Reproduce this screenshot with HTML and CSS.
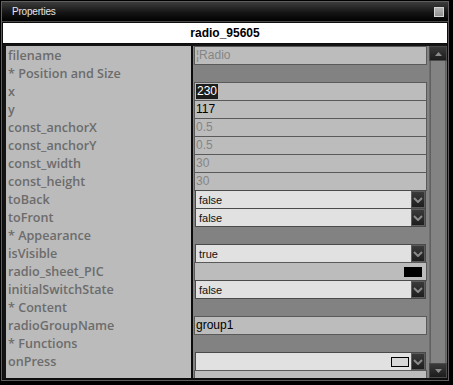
FILE: index.html
```html
<!DOCTYPE html>
<html lang="en">
<head>
    <meta charset="UTF-8">
    <title>Properties</title>
    <link rel="stylesheet" href="styles.css">
</head>
<body>
    <div class="window">
        <div class="frame">
            <!-- Panel title -->
            <div class="titlebar">
                <span class="title">Properties</span>
                <span class="title-btn"></span>
            </div>

            <div class="header">radio_95605</div>

            <div class="grid">
                <div class="props">
                    <div class="row">
                        <div class="label">filename</div>
                        <div class="value"><div class="box disabled">¦Radio</div></div>
                    </div>
                    <div class="row">
                        <div class="label">* Position and Size</div>
                        <div class="value"></div>
                    </div>
                    <div class="row">
                        <div class="label">x</div>
                        <div class="value"><div class="box"><span class="selected">230</span></div></div>
                    </div>
                    <div class="row">
                        <div class="label">y</div>
                        <div class="value"><div class="box">117</div></div>
                    </div>
                    <div class="row">
                        <div class="label">const_anchorX</div>
                        <div class="value"><div class="box disabled">0.5</div></div>
                    </div>
                    <div class="row">
                        <div class="label">const_anchorY</div>
                        <div class="value"><div class="box disabled">0.5</div></div>
                    </div>
                    <div class="row">
                        <div class="label">const_width</div>
                        <div class="value"><div class="box disabled">30</div></div>
                    </div>
                    <div class="row">
                        <div class="label">const_height</div>
                        <div class="value"><div class="box disabled">30</div></div>
                    </div>
                    <div class="row">
                        <div class="label">toBack</div>
                        <div class="value">
                            <div class="select"><span class="select-text">false</span><span class="select-btn"><svg width="10" height="6" viewBox="0 0 10 6"><polyline points="1,1 5,5 9,1" fill="none" stroke="#8a8a8a" stroke-width="2"/></svg></span></div>
                        </div>
                    </div>
                    <div class="row">
                        <div class="label">toFront</div>
                        <div class="value">
                            <div class="select"><span class="select-text">false</span><span class="select-btn"><svg width="10" height="6" viewBox="0 0 10 6"><polyline points="1,1 5,5 9,1" fill="none" stroke="#8a8a8a" stroke-width="2"/></svg></span></div>
                        </div>
                    </div>
                    <div class="row">
                        <div class="label">* Appearance</div>
                        <div class="value"></div>
                    </div>
                    <div class="row">
                        <div class="label">isVisible</div>
                        <div class="value">
                            <div class="select"><span class="select-text">true</span><span class="select-btn"><svg width="10" height="6" viewBox="0 0 10 6"><polyline points="1,1 5,5 9,1" fill="none" stroke="#8a8a8a" stroke-width="2"/></svg></span></div>
                        </div>
                    </div>
                    <div class="row">
                        <div class="label">radio_sheet_PIC</div>
                        <div class="value"><div class="box pic"><span class="swatch"></span></div></div>
                    </div>
                    <div class="row">
                        <div class="label">initialSwitchState</div>
                        <div class="value">
                            <div class="select"><span class="select-text">false</span><span class="select-btn"><svg width="10" height="6" viewBox="0 0 10 6"><polyline points="1,1 5,5 9,1" fill="none" stroke="#8a8a8a" stroke-width="2"/></svg></span></div>
                        </div>
                    </div>
                    <div class="row">
                        <div class="label">* Content</div>
                        <div class="value"></div>
                    </div>
                    <div class="row">
                        <div class="label">radioGroupName</div>
                        <div class="value"><div class="box">group1</div></div>
                    </div>
                    <div class="row">
                        <div class="label">* Functions</div>
                        <div class="value"></div>
                    </div>
                    <div class="row">
                        <div class="label">onPress</div>
                        <div class="value">
                            <div class="select"><span class="select-text"></span><span class="swatch light"></span><span class="select-btn"><svg width="10" height="6" viewBox="0 0 10 6"><polyline points="1,1 5,5 9,1" fill="none" stroke="#8a8a8a" stroke-width="2"/></svg></span></div>
                        </div>
                    </div>
                    <div class="row">
                        <div class="label"></div>
                        <div class="value"><div class="box"></div></div>
                    </div>
                </div>

                <!-- Scrollbar -->
                <div class="scrollbar">
                    <div class="scroll-btn"><svg width="7" height="4" viewBox="0 0 7 4"><polygon points="0,4 3.5,0 7,4" fill="#8c8c8c"/></svg></div>
                    <div class="scroll-track"><div class="scroll-thumb"></div></div>
                    <div class="scroll-btn"><svg width="7" height="4" viewBox="0 0 7 4"><polygon points="0,0 3.5,4 7,0" fill="#8c8c8c"/></svg></div>
                </div>
            </div>
        </div>
    </div>
</body>
</html>
```

FILE: styles.css
```css
body {
    margin: 0;
    background: #000;
    font-family: "Liberation Sans", Arial, sans-serif;
}

.window {
    width: 453px;
    height: 385px;
    box-sizing: border-box;
    padding: 1px 4px 4px 1px;
    background: #000;
}

.frame {
    height: 100%;
    box-sizing: border-box;
    border: 1px solid #5e5e5e;
    background: #0d0d0d;
    display: flex;
    flex-direction: column;
}

.titlebar {
    height: 19px;
    border-bottom: 1px solid #4a4a4a;
    background: linear-gradient(to bottom, #3c3c3c, #151515 55%, #000);
    display: flex;
    align-items: center;
    justify-content: space-between;
    padding: 0 4px 0 10px;
}

.title {
    color: #e6e6e6;
    font-size: 10px;
    letter-spacing: -0.2px;
}

.title-btn {
    width: 8px;
    height: 8px;
    border: 1px solid #d4d4d4;
    background: linear-gradient(to bottom, #b4b4b4, #8e8e8e);
}

.header {
    margin: 1px 1px 0 1px;
    height: 20px;
    line-height: 20px;
    background: #fff;
    text-align: center;
    font-weight: bold;
    font-size: 12px;
    color: #000;
}

.grid {
    flex: 1;
    min-height: 0;
    margin: 1px 1px 2px 1px;
    padding: 2px 0 0 3px;
    background: #141414;
    display: flex;
}

.props {
    flex: 1;
    overflow: hidden;
    background: linear-gradient(to right, #bbbbbb 0 185px, #0c0c0c 185px 187px, #828282 187px);
}

.row {
    display: flex;
    height: 18px;
}

.label {
    width: 187px;
    box-sizing: border-box;
    padding-left: 2px;
    font-family: "Open Sans", sans-serif;
    font-weight: 600;
    font-size: 12.6px;
    line-height: 19px;
    color: #6c6c6c;
    white-space: nowrap;
}

.value {
    width: 235px;
    position: relative;
}

.box {
    margin: 0 1px;
    height: 19px;
    box-sizing: border-box;
    border: 1px solid #5a5a5a;
    background: #bcbcbc;
    font-size: 12px;
    line-height: 17px;
    padding-left: 1px;
    color: #000;
    display: flex;
    align-items: center;
}

.box.disabled {
    color: #858585;
}

.selected {
    background: #1c1c1c;
    color: #fff;
    padding: 0 1px;
    line-height: 15px;
}

.box.pic {
    justify-content: flex-end;
    padding-right: 4px;
}

.swatch {
    width: 18px;
    height: 10px;
    background: #000;
}

.swatch.light {
    box-sizing: border-box;
    border: 1px solid #000;
    background: #d6d6d6;
    margin-right: 2px;
}

.select {
    margin: 0 2px 0 2px;
    height: 19px;
    box-sizing: border-box;
    border: 1px solid #4a4a4a;
    background: #e1e1e1;
    display: flex;
    align-items: center;
    padding-left: 3px;
    padding-right: 0;
}

.select-text {
    flex: 1;
    font-size: 11px;
    color: #111;
}

.select-btn {
    width: 14px;
    height: 17px;
    box-sizing: border-box;
    border: 1px solid #5c5c5c;
    background: linear-gradient(to bottom, #3a3a3a, #1e1e1e);
    display: flex;
    align-items: center;
    justify-content: center;
}

.scrollbar {
    width: 18px;
    display: flex;
    flex-direction: column;
    background: #555;
}

.scroll-btn {
    height: 15px;
    box-sizing: border-box;
    border: 1px solid #4a4a4a;
    background: linear-gradient(to bottom, #3a3a3a, #1c1c1c);
    display: flex;
    align-items: center;
    justify-content: center;
}

.scroll-track {
    flex: 1;
    background: #6e6e6e;
    padding: 0 1px;
    display: flex;
}

.scroll-thumb {
    flex: 1;
    border-left: 1px solid #606060;
    border-right: 1px solid #606060;
    background: #838383;
}
```
